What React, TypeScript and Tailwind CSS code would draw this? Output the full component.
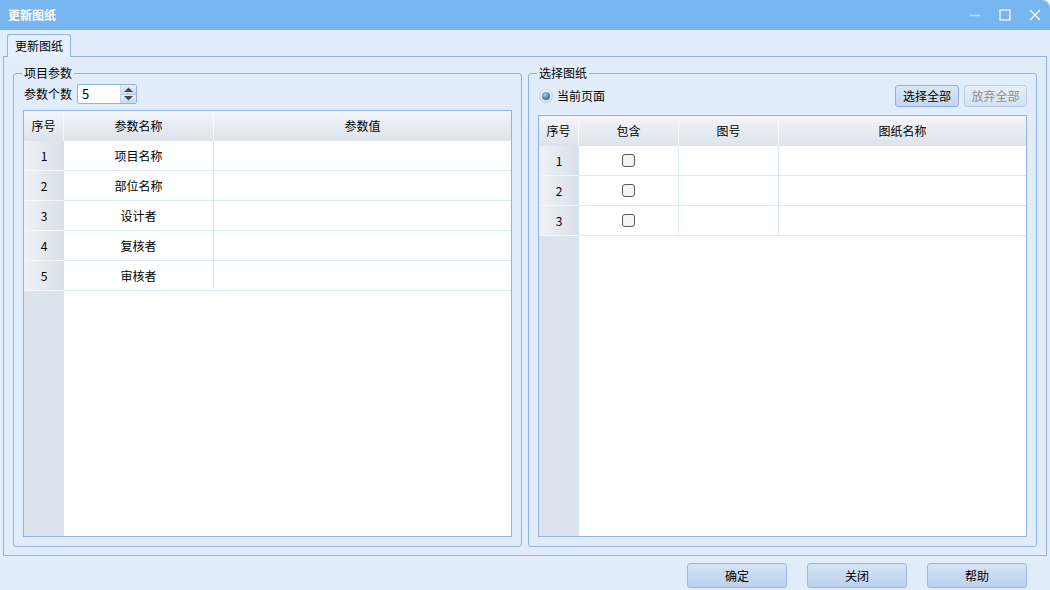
import React from "react";

const FONT = '"Microsoft YaHei", "Noto Sans CJK SC", "Noto Sans", sans-serif';

interface Column {
  title: string;
  width?: number;
}

interface GridProps {
  columns: Column[];
  rows: React.ReactNode[][];
}

// header gradient for the grid
const headCell =
  "h-[30px] flex items-center justify-center border-r border-[#f7f9fc] bg-gradient-to-b from-[#f3f5f8] to-[#dce3eb]";

const Grid: React.FC<GridProps> = ({ columns, rows }) => {
  const colStyle = (c: Column) =>
    c.width ? { width: c.width, flex: "none" } : { flex: 1 };

  return (
    <div className="flex-1 flex flex-col border border-[#8fb3e3] bg-white min-h-0">
      <div className="flex">
        <div className={`${headCell} w-[40px]`}>序号</div>
        {columns.map((c, i) => (
          <div
            key={c.title}
            className={`${headCell} ${i === columns.length - 1 ? "border-r-0" : ""}`}
            style={colStyle(c)}
          >
            {c.title}
          </div>
        ))}
      </div>
      {rows.map((cells, r) => (
        <div key={r} className="flex h-[30px]">
          <div className="w-[40px] flex items-center justify-center border-b border-[#f3f6fa] bg-gradient-to-r from-[#eff2f6] to-[#d8e0ea]">
            {r + 1}
          </div>
          {cells.map((cell, i) => (
            <div
              key={i}
              className={`flex items-center justify-center border-b border-[#dde8f6] ${
                i === cells.length - 1 ? "" : "border-r"
              }`}
              style={colStyle(columns[i])}
            >
              {cell}
            </div>
          ))}
        </div>
      ))}
      <div className="flex-1 flex">
        <div className="w-[40px] bg-[#dbe3ec]" />
        <div className="flex-1 bg-white" />
      </div>
    </div>
  );
};

const GroupBox: React.FC<{ title: string; children: React.ReactNode }> = ({
  title,
  children,
}) => (
  <fieldset className="flex-1 flex flex-col border border-[#8fb3e3] rounded-[3px] px-[9px] pb-[9px] min-w-0">
    <legend className="ml-[-1px] px-[2px] leading-[16px]">{title}</legend>
    {children}
  </fieldset>
);

const CheckBox = () => (
  <span className="block w-[13px] h-[13px] rounded-[3px] border border-[#5a5a5a] bg-[#f3f3f3]" />
);

const SpinBox = () => (
  <div className="flex w-[60px] h-[20px] border border-[#8fb3e3] rounded-[2px] bg-white">
    <span className="flex-1 pl-[4px] leading-[18px] text-[13px]">5</span>
    <div className="w-[16px] flex flex-col border-l border-[#c6d6ea]">
      <div className="flex-1 flex items-center justify-center bg-gradient-to-b from-[#e9eef5] to-[#cfd9e6] border-b border-[#b8c8dc]">
        <svg width="9" height="5" viewBox="0 0 9 5">
          <path d="M0 5 L4.5 0.5 L9 5 Z" fill="#3d4b5c" />
        </svg>
      </div>
      <div className="flex-1 flex items-center justify-center bg-gradient-to-b from-[#e9eef5] to-[#cfd9e6]">
        <svg width="9" height="5" viewBox="0 0 9 5">
          <path d="M0 0 L4.5 4.5 L9 0 Z" fill="#3d4b5c" />
        </svg>
      </div>
    </div>
  </div>
);

const footButton =
  "w-[100px] h-[25px] rounded-[3px] border border-[#9db8dc] bg-gradient-to-b from-[#d6e4f6] to-[#bbd0eb] text-black";

export default function App() {
  const paramRows = ["项目名称", "部位名称", "设计者", "复核者", "审核者"].map(
    (name) => [name, ""]
  );
  const drawRows = [1, 2, 3].map(() => [<CheckBox />, "", ""]);

  return (
    <div
      className="w-[1050px] h-[590px] flex flex-col bg-[#e2edfb] text-[12px] text-black overflow-hidden rounded-tr-[8px]"
      style={{ fontFamily: FONT }}
    >
      {/* title bar */}
      <div className="h-[30px] flex items-center bg-[#78b6f2] pl-[8px]">
        <span className="flex-1 text-white font-bold text-[12px]">更新图纸</span>
        <div className="flex items-center h-full">
          <div className="w-[30px] flex justify-center">
            <svg width="12" height="12" viewBox="0 0 12 12">
              <path d="M1 6.5 H11" stroke="#c8e0fa" strokeWidth="1.4" />
            </svg>
          </div>
          <div className="w-[30px] flex justify-center">
            <svg width="12" height="12" viewBox="0 0 12 12">
              <rect x="1" y="1" width="10" height="10" fill="none" stroke="#fff" strokeWidth="1.2" />
            </svg>
          </div>
          <div className="w-[30px] flex justify-center">
            <svg width="12" height="12" viewBox="0 0 12 12">
              <path d="M1 1 L11 11 M11 1 L1 11" stroke="#fff" strokeWidth="1.2" />
            </svg>
          </div>
        </div>
      </div>

      {/* tab strip */}
      <div className="pt-[4px] px-[7px] flex">
        <div className="relative z-10 -mb-px h-[23px] px-[7px] flex items-center border border-b-0 border-[#8fb3e3] rounded-t-[3px] bg-[#e6f0fc]">
          更新图纸
        </div>
      </div>

      {/* tab page */}
      <div className="h-[500px] mx-[3px] border border-[#8fb3e3] flex gap-[6px] pt-[8px] pb-[8px] pl-[9px] pr-[9px]">
        <GroupBox title="项目参数">
          <div className="mt-[3px] flex items-center gap-[5px] h-[20px]">
            <span className="ml-[1px]">参数个数</span>
            <SpinBox />
          </div>
          <div className="mt-[6px] flex-1 flex flex-col min-h-0">
            <Grid
              columns={[{ title: "参数名称", width: 150 }, { title: "参数值" }]}
              rows={paramRows}
            />
          </div>
        </GroupBox>

        <GroupBox title="选择图纸">
          <div className="mt-[4px] h-[22px] flex items-center">
            <span className="ml-[1px] w-[14px] h-[14px] rounded-full border border-[#c5cfdb] bg-gradient-to-b from-[#f4f6f9] to-[#d9e0e8] flex items-center justify-center">
              <span className="w-[8px] h-[8px] rounded-full bg-[radial-gradient(circle_at_40%_35%,#a9d0f5,#3f79b8_60%,#2a5c99)]" />
            </span>
            <span className="ml-[4px] flex-1">当前页面</span>
            <button className="w-[64px] h-[22px] rounded-[3px] border border-[#8fb0da] bg-gradient-to-b from-[#dbe7f7] to-[#c2d6f0] text-black">
              选择全部
            </button>
            <button
              disabled
              className="ml-[5px] w-[63px] h-[22px] rounded-[3px] border border-[#b9cde7] bg-gradient-to-b from-[#e7eff9] to-[#d5e2f2] text-[#8d8d8d]"
            >
              放弃全部
            </button>
          </div>
          <div className="mt-[8px] flex-1 flex flex-col min-h-0">
            <Grid
              columns={[
                { title: "包含", width: 100 },
                { title: "图号", width: 100 },
                { title: "图纸名称" },
              ]}
              rows={drawRows}
            />
          </div>
        </GroupBox>
      </div>

      {/* footer */}
      <div className="flex justify-end gap-[20px] pr-[23px] pt-[7px]">
        <button className={footButton}>确定</button>
        <button className={footButton}>关闭</button>
        <button className={footButton}>帮助</button>
      </div>
    </div>
  );
}
